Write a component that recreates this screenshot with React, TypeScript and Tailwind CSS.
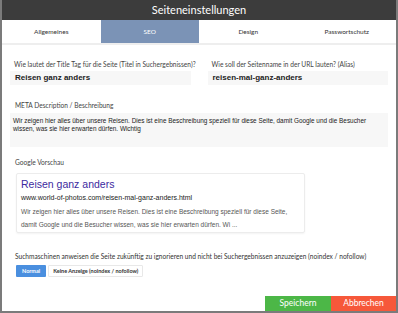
import React from "react";

const tabs = ["Allgemeines", "SEO", "Design", "Passwortschutz"];

export default function App() {
  return (
    <div className="w-[398px] h-[313px] flex flex-col bg-white border-x-2 border-b-2 border-[#7b7b7b] font-['Lato',sans-serif] overflow-hidden">
      <div className="h-[20px] shrink-0 bg-[#3c3c3c] text-white text-[11px] leading-[20px] text-center">
        Seiteneinstellungen
      </div>
      <div className="grid grid-cols-4 h-[25px] shrink-0 border-b-2 border-[#eeeeee]">
        {tabs.map((t) => (
          <div
            key={t}
            className={
              t === "SEO"
                ? "bg-[#7b93b6] text-white text-[6.5px] flex items-center justify-center"
                : "text-[#333] text-[6.5px] flex items-center justify-center"
            }
          >
            {t}
          </div>
        ))}
      </div>

      <div className="flex-1 flex flex-col px-[8px]">
        <div className="grid grid-cols-2 gap-[17px] mt-[15px]">
          <div>
            <div className="text-[6.6px] leading-[8px] text-[#444] px-[4px] whitespace-nowrap">
              Wie lautet der Title Tag für die Seite (Titel in Suchergebnissen)?
            </div>
            <div className="mt-[3px] h-[14px] bg-[#f7f7f7] px-[5px] text-[8px] leading-[14px] text-[#222] font-['Liberation_Sans',sans-serif] font-bold">
              Reisen ganz anders
            </div>
          </div>
          <div>
            <div className="text-[6.6px] leading-[8px] text-[#444] px-[4px] whitespace-nowrap">
              Wie soll der Seitenname in der URL lauten? (Alias)
            </div>
            <div className="mt-[3px] h-[14px] bg-[#f7f7f7] px-[5px] text-[8px] leading-[14px] text-[#222] font-['Liberation_Sans',sans-serif] font-bold">
              reisen-mal-ganz-anders
            </div>
          </div>
        </div>

        <div className="mt-[16px] text-[6.6px] leading-[8px] text-[#444] px-[5px]">META Description / Beschreibung</div>
        <div className="mt-[4px] h-[34px] bg-[#f7f7f7] px-[3px] pt-[4px] text-[6.4px] leading-[8px] text-[#222] font-['Liberation_Sans',sans-serif]">
          Wir zeigen hier alles über unsere Reisen. Dies ist eine Beschreibung speziell für diese Seite, damit Google und die Besucher wissen, was sie hier erwarten dürfen. Wichtig
        </div>

        <div className="mt-[11px] text-[6.6px] leading-[8px] text-[#444] px-[5px]">Google Vorschau</div>
        <div className="mt-[7px] ml-[6px] w-[289px] h-[60px] border border-[#ececec] rounded-[2px] px-[4px] pt-[4px] font-['Liberation_Sans',sans-serif] shadow-[0_1px_2px_rgba(0,0,0,0.05)]">
          <div className="text-[10.5px] leading-[12px] text-[#3c2aa0]">Reisen ganz anders</div>
          <div className="mt-[3px] text-[7px] leading-[9px] text-[#222]">
            www.world-of-photos.com/reisen-mal-ganz-anders.html
          </div>
          <div className="mt-[3px] text-[6.5px] leading-[13px] text-[#555]">
            Wir zeigen hier alles über unsere Reisen. Dies ist eine Beschreibung speziell für diese Seite, damit Google und die Besucher wissen, was sie hier erwarten dürfen. Wi ...
          </div>
        </div>

        <div className="mt-[19px] text-[6.6px] leading-[8px] text-[#333] px-[5px]">
          Suchmaschinen anweisen die Seite zukünftig zu ignorieren und nicht bei Suchergebnissen anzuzeigen (noindex / nofollow)
        </div>
        <div className="mt-[5px] ml-[6px] flex gap-[2px] h-[12px]">
          <div className="bg-[#4a8fdf] text-white text-[5.5px] font-bold px-[6px] leading-[12px] rounded-[1px]">Normal</div>
          <div className="border border-[#e8e8e8] text-[#333] text-[5.5px] font-bold px-[4px] leading-[10px] rounded-[1px]">
            Keine Anzeige (noindex / nofollow)
          </div>
        </div>

        <div className="mt-auto flex justify-end -mr-[8px]">
          <div className="w-[66px] h-[15px] bg-[#4cb747] text-white text-[8.5px] leading-[15px] text-center">Speichern</div>
          <div className="w-[65px] h-[15px] bg-[#f6583a] text-white text-[8.5px] leading-[15px] text-center">Abbrechen</div>
        </div>
      </div>
    </div>
  );
}
